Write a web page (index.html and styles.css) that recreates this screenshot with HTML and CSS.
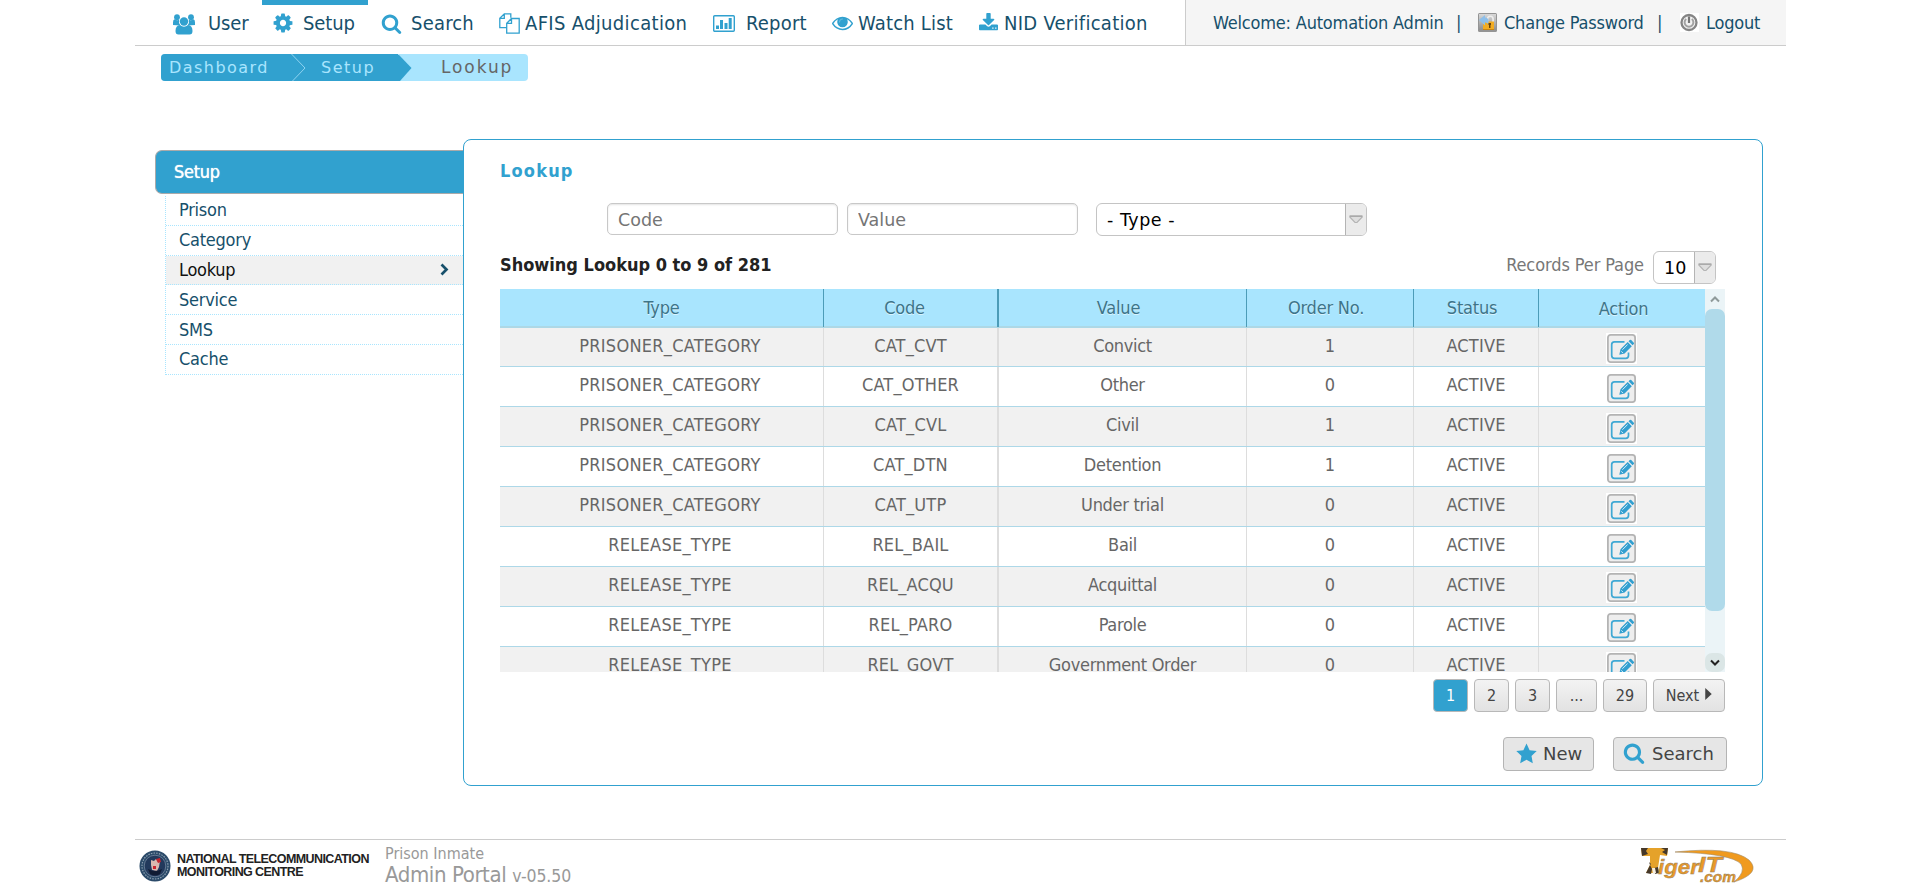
FILE: index.html
```
<!DOCTYPE html>
<html lang="en">
<head>
<meta charset="utf-8">
<title>Lookup - Prison Inmate Admin Portal</title>
<link rel="stylesheet" href="styles.css">
</head>
<body>
<svg class="defs" width="0" height="0" aria-hidden="true">
  <symbol id="i-search" viewBox="0 0 1792 1792"><path d="M1216 832q0-185-131.500-316.500t-316.500-131.500-316.500 131.500-131.500 316.500 131.500 316.500 316.500 131.500 316.500-131.500 131.500-316.500zm512 832q0 52-38 90t-90 38q-54 0-90-38l-343-342q-179 124-399 124-143 0-273.500-55.500t-225-150-150-225-55.500-273.500 55.500-273.500 150-225 225-150 273.500-55.500 273.500 55.500 225 150 150 225 55.500 273.500q0 220-124 399l343 343q37 37 37 90z"/></symbol>
  <symbol id="i-edit" viewBox="0 0 31 31">
    <rect width="31" height="31" fill="#fff"/>
    <rect x="1.900" y="1.900" width="27.200" height="27.200" rx="2.800" fill="#eee" stroke="#b4b4b4" stroke-width="1.800"/>
    <path d="M18.500 8.800H8.500a2.800 2.800 0 0 0-2.800 2.800v11a2.800 2.800 0 0 0 2.800 2.800h11.200a2.800 2.800 0 0 0 2.800-2.800v-3" fill="none" stroke="#3fa8d4" stroke-width="1.700"/>
    <path d="M13.300 21.700l1.200-5.400 7.200-7.200 4.100 4.100-7.200 7.200zM22.500 8.300l1.300-1.200q.7-.6 1.400 0l2.600 2.600q.6.700 0 1.400l-1.200 1.200z" fill="#329fd0"/>
    <path d="M16.300 16.800l5.300-5.200M15.200 18.300l1.700 1.700" stroke="#d8eef8" stroke-width="1"/>
  </symbol>
  <symbol id="i-drop" viewBox="0 0 14 9"><path d="M.8 1h12.400v1L8 7.500H6L.8 2z" fill="#dedede" stroke="#b4b4b4" stroke-width="1.200"/><path d="M1 1.200h12" stroke="#aaa" stroke-width="1.400"/></symbol>
</svg>
<div class="page">
  <header class="topbar">
    <nav class="nav">
      <a class="nav-item user"><svg class="ico" width="22" height="21" viewBox="0 0 22 21"><circle cx="4" cy="3.200" r="2.900"/><circle cx="18" cy="3.200" r="2.900"/><path d="M0 11V8.500Q0 5.500 1.500 5.300q2.500 1.500 4.700.5Q5.300 9 7.500 11.500zM22 11V8.500Q22 5.500 20.500 5.300q-2.500 1.500-4.700.5.900 3.200-1.300 5.700z"/><circle cx="11" cy="7.500" r="4.200"/><path d="M7 11q4 3.300 8 0 4.500.6 4.500 6 0 3.500-3 3.500h-11q-3 0-3-3.500 0-5.400 4.500-6z"/></svg><span>User</span></a>
      <a class="nav-item setup active"><svg class="ico" width="22" height="22" viewBox="0 0 1792 1792"><path d="M1152 896q0-106-75-181t-181-75-181 75-75 181 75 181 181 75 181-75 75-181zm512-109v222q0 12-8 23t-20 13l-185 28q-19 54-39 91 35 50 107 138 10 12 10 25t-9 23q-27 37-99 108t-94 71q-12 0-26-9l-138-108q-44 23-91 38-16 136-29 186-7 28-36 28h-222q-14 0-24.500-8.500t-11.500-21.500l-28-184q-49-16-90-37l-141 107q-10 9-25 9-14 0-25-11-126-114-165-168-7-10-7-23 0-12 8-23 15-21 51-66.500t54-70.500q-27-50-41-99l-183-27q-13-2-21-12.500t-8-23.500v-222q0-12 8-23t19-13l186-28q14-46 39-92-40-57-107-138-10-12-10-24 0-10 9-23 26-36 98.500-107.500t94.500-71.500q13 0 26 10l138 107q44-23 91-38 16-136 29-186 7-28 36-28h222q14 0 24.500 8.500t11.500 21.500l28 184q49 16 90 37l142-107q9-9 24-9 13 0 25 10 129 119 165 170 7 8 7 22 0 12-8 23-15 21-51 66.500t-54 70.500q26 50 41 98l183 28q13 2 21 12.500t8 23.500z"/></svg><span>Setup</span></a>
      <a class="nav-item search"><svg class="ico" width="21" height="21"><use href="#i-search"/></svg><span>Search</span></a>
      <a class="nav-item afis"><svg class="ico line" width="21" height="21" viewBox="0 0 21 21"><path d="M7.500 14.700H.8V5.300L5.300.8h6.500v4M5.300.8v4.500H.8M12.500 5.500h7.700v14.700H7.700V10.300zM12.500 5.500v4.800H7.700"/></svg><span>AFIS Adjudication</span></a>
      <a class="nav-item report"><svg class="ico" width="22" height="17" viewBox="0 0 22 17"><rect x=".7" y=".7" width="20.600" height="15.600" rx="1" fill="none" stroke="#31a1cf" stroke-width="1.400"/><path d="M3 10.500h3V14H3zM7 5h3v9H7zM11.500 8h3v6h-3zM15.700 3h3v11h-3z"/></svg><span>Report</span></a>
      <a class="nav-item watch"><svg class="ico" width="21" height="21" viewBox="0 64 1792 1792"><path d="M1664 960q-152-236-381-353 61 104 61 225 0 185-131.500 316.500t-316.500 131.500-316.500-131.500-131.500-316.500q0-121 61-225-229 117-381 353 133 205 333.500 326.500t434.500 121.500 434.500-121.500 333.500-326.500zm-720-384q0-20-14-34t-34-14q-125 0-214.500 89.500t-89.500 214.500q0 20 14 34t34 14 34-14 14-34q0-86 61-147t147-61q20 0 34-14t14-34zm848 384q0 34-20 69-140 230-376.500 368.500t-499.500 138.500-499.500-139-376.500-368q-20-35-20-69t20-69q140-229 376.500-368t499.500-139 499.500 139 376.500 368q20 35 20 69z"/><circle cx="896" cy="860" r="400" opacity=".75"/></svg><span>Watch List</span></a>
      <a class="nav-item nid"><svg class="ico" width="19" height="18" viewBox="64 0 1664 1600" preserveAspectRatio="none"><path d="M1344 1344q0-26-19-45t-45-19-45 19-19 45 19 45 45 19 45-19 19-45zm256 0q0-26-19-45t-45-19-45 19-19 45 19 45 45 19 45-19 19-45zm128-224v320q0 40-28 68t-68 28h-1472q-40 0-68-28t-28-68v-320q0-40 28-68t68-28h465l135 136q58 56 136 56t136-56l136-136h464q40 0 68 28t28 68zm-325-569q17 41-14 70l-448 448q-18 19-45 19t-45-19l-448-448q-31-29-14-70 17-39 59-39h256v-448q0-26 19-45t45-19h256q26 0 45 19t19 45v448h256q42 0 59 39z"/></svg><span>NID Verification</span></a>
    </nav>
    <div class="account">
      <span class="welcome">Welcome: Automation Admin</span><span class="bar">|</span>
      <a class="change"><svg class="pic" width="19" height="19" viewBox="0 0 19 19"><defs><linearGradient id="g1" x1="0" y1="0" x2="0" y2="1"><stop offset="0" stop-color="#d8d8d8"/><stop offset="1" stop-color="#8f8f8f"/></linearGradient></defs><rect width="19" height="19" rx="1.500" fill="#949494"/><rect x="1" y="1" width="17" height="16" fill="url(#g1)"/><path d="M9.500 9V6a2.800 2.800 0 0 1 5.600 0v3" fill="none" stroke="#eee" stroke-width="1.600"/><rect x="5" y="8.500" width="11" height="8.500" fill="#f2ac22"/><path d="M5 16.500h11" stroke="#c98510"/><path d="M1 7l6-5v2.500q3.500 0 3.500 4v3q-1.500-2.200-3.500-2v3z" fill="#8dbfea"/><path d="M10.500 10H13v2h-.5v3H11v-3h-.5z" fill="#67420b"/></svg><span>Change Password</span></a><span class="bar">|</span>
      <a class="logout"><svg class="pic" width="19" height="19" viewBox="0 0 19 19"><rect width="19" height="19" fill="#fff"/><circle cx="9" cy="9.500" r="7.500" fill="#f2f2f2" stroke="#858585" stroke-width="2.300"/><path d="M6.200 6a4.400 4.400 0 1 0 5.600 0" fill="none" stroke="#a2a2a2" stroke-width="2"/><path d="M9 3.500v6.500" stroke="#777" stroke-width="2.200"/></svg><span>Logout</span></a>
    </div>
  </header>

  <div class="crumbs">
    <a class="crumb first">Dashboard</a>
    <svg class="sep" width="15" height="27" viewBox="0 0 15 27"><path d="M.5 0L14 14 1.500 27" fill="none" stroke="#8fd3f0" stroke-width="1"/></svg>
    <a class="crumb second">Setup</a>
    <svg class="tip" width="14" height="27" viewBox="0 0 14 27"><path d="M0 1l1 0 12.500 13L2 27H0z" fill="#31a1cf"/></svg>
    <span class="crumb current">Lookup</span>
  </div>

  <main class="main">
    <aside class="side">
      <h2 class="side-head">Setup</h2>
      <ul class="side-list">
        <li>Prison</li>
        <li>Category</li>
        <li class="on"><span>Lookup</span><svg width="9" height="13" viewBox="0 0 9 13"><path d="M1.500 1.500L6.500 6.500 1.500 11.500" fill="none" stroke="#17506b" stroke-width="2.700"/></svg></li>
        <li>Service</li>
        <li>SMS</li>
        <li>Cache</li>
      </ul>
    </aside>
    <section class="panel">
      <h1 class="title">Lookup</h1>
      <div class="filters">
        <input class="field" type="text" placeholder="Code">
        <input class="field" type="text" placeholder="Value">
        <div class="select type"><span>- Type -</span><i><svg width="14" height="9"><use href="#i-drop"/></svg></i></div>
      </div>
      <div class="summary">
        <strong>Showing Lookup 0 to 9 of 281</strong>
        <span class="rpp">Records Per Page</span>
        <div class="select count"><span>10</span><i><svg width="14" height="9"><use href="#i-drop"/></svg></i></div>
      </div>
      <div class="grid">
        <div class="table">
          <div class="row head"><div>Type</div><div>Code</div><div>Value</div><div>Order No.</div><div>Status</div><div>Action</div></div>
          <div class="row"><div>PRISONER_CATEGORY</div><div>CAT_CVT</div><div class="val">Convict</div><div>1</div><div>ACTIVE</div><div><svg class="edit"><use href="#i-edit"/></svg></div></div>
          <div class="row"><div>PRISONER_CATEGORY</div><div>CAT_OTHER</div><div class="val">Other</div><div>0</div><div>ACTIVE</div><div><svg class="edit"><use href="#i-edit"/></svg></div></div>
          <div class="row"><div>PRISONER_CATEGORY</div><div>CAT_CVL</div><div class="val">Civil</div><div>1</div><div>ACTIVE</div><div><svg class="edit"><use href="#i-edit"/></svg></div></div>
          <div class="row"><div>PRISONER_CATEGORY</div><div>CAT_DTN</div><div class="val">Detention</div><div>1</div><div>ACTIVE</div><div><svg class="edit"><use href="#i-edit"/></svg></div></div>
          <div class="row"><div>PRISONER_CATEGORY</div><div>CAT_UTP</div><div class="val">Under trial</div><div>0</div><div>ACTIVE</div><div><svg class="edit"><use href="#i-edit"/></svg></div></div>
          <div class="row"><div>RELEASE_TYPE</div><div>REL_BAIL</div><div class="val">Bail</div><div>0</div><div>ACTIVE</div><div><svg class="edit"><use href="#i-edit"/></svg></div></div>
          <div class="row"><div>RELEASE_TYPE</div><div>REL_ACQU</div><div class="val">Acquittal</div><div>0</div><div>ACTIVE</div><div><svg class="edit"><use href="#i-edit"/></svg></div></div>
          <div class="row"><div>RELEASE_TYPE</div><div>REL_PARO</div><div class="val">Parole</div><div>0</div><div>ACTIVE</div><div><svg class="edit"><use href="#i-edit"/></svg></div></div>
          <div class="row"><div>RELEASE_TYPE</div><div>REL_GOVT</div><div class="val">Government Order</div><div>0</div><div>ACTIVE</div><div><svg class="edit"><use href="#i-edit"/></svg></div></div>
        </div>
        <div class="scroll">
          <div class="arrow"><svg width="10" height="7" viewBox="0 0 10 7"><path d="M1 5.500L5 1.500l4 4" fill="none" stroke="#8f9a9a" stroke-width="2"/></svg></div>
          <div class="thumb"></div>
          <div class="arrow down"><svg width="10" height="7" viewBox="0 0 10 7"><path d="M1 1.500l4 4 4-4" fill="none" stroke="#222" stroke-width="2"/></svg></div>
        </div>
      </div>
      <div class="pager">
        <a class="pg on">1</a><a class="pg">2</a><a class="pg">3</a><a class="pg dots">...</a><a class="pg last">29</a><a class="pg next"><span>Next</span><svg width="7" height="12" viewBox="0 0 7 13"><path d="M0 0l7 6.500L0 13z" fill="#444"/></svg></a>
      </div>
      <div class="actions">
        <button class="btn new"><svg width="21" height="21" viewBox="0 0 21 21"><path d="M10.500.5l3.100 6.700 7.100.9-5.200 5 1.300 7.200-6.300-3.500-6.300 3.500 1.300-7.200-5.200-5 7.100-.9z" fill="#31a1cf"/></svg><span>New</span></button>
        <button class="btn find"><svg width="22" height="22" fill="#31a1cf"><use href="#i-search"/></svg><span>Search</span></button>
      </div>
    </section>
  </main>

  <footer class="foot">
    <svg class="seal" width="32" height="32" viewBox="0 0 32 32"><circle cx="16" cy="16" r="15.500" fill="#2b4a69"/><circle cx="16" cy="16" r="13" fill="none" stroke="#8ea0b2" stroke-width="1.200" stroke-dasharray="1.500 1.200"/><circle cx="16" cy="16" r="10.800" fill="#22395c" stroke="#7488a0" stroke-width=".8"/><path d="M12 10l3 1 2-2 2 3 2-1-1 6-2 4-5-1-1-5z" fill="#d9b9b0"/><path d="M17 9l4-1 1 4-3 1zM14 16h3v3h-3z" fill="#c9252f"/><path d="M9 19q7 4 14 0l-2 5q-5 3-10 0z" fill="#101b33"/></svg>
    <div class="org">NATIONAL TELECOMMUNICATION<br>MONITORING CENTRE</div>
    <div class="product"><div class="p1">Prison Inmate</div><div class="p2">Admin Portal <small>v-05.50</small></div></div>
    <svg class="tiger" width="116" height="38" viewBox="0 0 116 38">
      <path d="M35 5Q92-1 109 13q13 13-15 22 12-10 7-18Q91 6.500 35 5z" fill="#f09a1e" stroke="#a08a66" stroke-width=".6"/>
      <path d="M1 1h27l-1 8-7-1-2 13 1 5H6l4-8V9L2 9z" fill="#e5a22a"/>
      <path d="M1 1h7l-2 3 2 3-6 2zM21 1h7l-1 7-5-3 3-2zM6 26l4-8 2 4-1 5zM14 21l4-1 1 6-4 1zM9 15l2 2-1 1z" fill="#45382a"/>
      <path d="M12 21h3l1 5-3 1z" fill="#f6efe2"/>
      <text x="18" y="27" class="t1" textLength="41" lengthAdjust="spacingAndGlyphs">iger</text>
      <text x="58" y="24.500" class="t2" textLength="24" lengthAdjust="spacingAndGlyphs">IT</text>
      <text x="60" y="35" class="t3" textLength="36" lengthAdjust="spacingAndGlyphs">.com</text>
    </svg>
  </footer>
</div>
</body>
</html>
```
FILE: styles.css
```
* { box-sizing: border-box; }
body {
  margin: 0;
  background: #fff;
  font-family: "DejaVu Sans Condensed", "DejaVu Sans", sans-serif;
  font-size: 18px;
  color: #17506b;
}
.defs { position: absolute; }
.page { width: 1651px; margin: 0 auto; height: 892px; overflow: hidden; }
svg { flex: none; display: block; }

/* top bar */
.topbar { display: flex; height: 46px; border-bottom: 1px solid #ccc; }
.nav { display: flex; flex: 1; padding-left: 29px; font-size: 20px; line-height: 45px; letter-spacing: .2px; white-space: nowrap; }
.nav-item { display: flex; align-items: center; height: 46px; }
.ico { fill: #31a1cf; }
.ico.line { fill: none; stroke: #31a1cf; stroke-width: 1.3; }
.user { width: 98px; padding-left: 9px; letter-spacing: -.1px; }
.user .ico { margin: 2px 13px 0 0; }
.setup { width: 106px; padding-left: 10px; letter-spacing: -.1px; }
.setup.active { box-shadow: inset 0 5px #31a1cf; }
.setup .ico { margin-right: 9px; }
.search { width: 131px; padding-left: 13px; }
.search .ico { margin-right: 9px; }
.afis { width: 214px; letter-spacing: .33px; }
.afis .ico { margin-right: 5px; }
.report { width: 119px; letter-spacing: .2px; }
.report .ico { margin-right: 11px; }
.watch { width: 147px; }
.watch .ico { margin-right: 5px; }
.nid { letter-spacing: .28px; }
.nid .ico { margin: -3px 6px 0 0; }
.account {
  display: flex; align-items: center; width: 601px; height: 45px; padding-left: 27px;
  background: #f5f5f5; border-left: 1px solid #ccc;
  line-height: 45px; letter-spacing: -.2px; white-space: nowrap;
}
.welcome { width: 243px; }
.bar { width: 22px; }
.change, .logout { display: flex; align-items: center; }
.change { width: 179px; }
.change .pic { margin-right: 7px; }
.logout .pic { margin: 0 7px 0 1px; }

/* breadcrumb */
.crumbs {
  display: flex; width: 367px; height: 27px; margin: 8px 0 0 26px; border-radius: 4px; overflow: hidden;
  background: #a9e5fe; line-height: 27px; font-size: 16px; color: #a9e5fe; white-space: nowrap;
  font-family: "DejaVu Sans", sans-serif;
}
.crumb.first, .crumb.second, .sep { background: #31a1cf; }
.crumb.first { width: 130px; padding-left: 8px; letter-spacing: 1.45px; }
.crumb.second { width: 92px; padding-left: 15px; letter-spacing: 1.5px; }
.crumb.current { padding-left: 29px; font-size: 17px; letter-spacing: 1.9px; color: #666; }

/* body */
.main { display: flex; height: 647px; margin: 58px 0 0 20px; }
.side { width: 308px; padding-top: 11px; }
.side-head {
  height: 44px; margin: 0; padding-left: 18px; border: 1px solid #aaa; border-right: 0;
  border-radius: 7px 0 0 7px; background: #31a1cf; color: #fff;
  font-size: 18px; font-weight: normal; line-height: 42px; letter-spacing: -.3px; text-shadow: 0 0 1px #fff;
}
.side-list { list-style: none; margin: 2px 0 0 10px; padding: 0; border-left: 1px dotted #a9e5fe; }
.side-list li {
  display: flex; justify-content: space-between; align-items: center; height: 29.8px;
  padding: 0 14px 0 13px; border-bottom: 1px dotted #a9e5fe; letter-spacing: -.25px; line-height: 28px;
}
.side-list li.on { background: #f1f1f1; color: #111; }
.panel { width: 1300px; border: 1px solid #31a1cf; border-radius: 8px; padding: 0 29px 0 36px; }
.title { margin: 20px 0 0; font: bold 18px/22px "DejaVu Sans Condensed", sans-serif; letter-spacing: 1.2px; color: #31a1cf; }
.filters { display: flex; margin: 21px 0 0 107px; height: 33px; font-family: "DejaVu Sans", sans-serif; }
.field {
  width: 231px; height: 32px; margin-right: 9px; padding: 1px 10px 0; border: 1px solid #c8c8c8; border-radius: 5px;
  box-shadow: inset 0 1px 2px #e4e4e4; background: #fff; font: 17.5px "DejaVu Sans", sans-serif;
}
.field::placeholder { color: #757575; opacity: 1; }
.select {
  display: flex; height: 33px; border: 1px solid #c4c4c4; border-radius: 6px; overflow: hidden; background: #fff;
  color: #000; font: 17.5px/32px "DejaVu Sans", sans-serif;
}
.select span { flex: 1; }
.select i { display: flex; justify-content: center; align-items: center; width: 21px; border-left: 1px solid #b4b4b4; background: #ebebeb; }
.type { width: 271px; margin-left: 9px; }
.type span { padding-left: 10px; letter-spacing: .5px; }
.summary { display: flex; height: 38px; margin-top: 15px; line-height: 28px; }
.summary strong { flex: 1; color: #222; }
.rpp { color: #777; letter-spacing: -.1px; margin-right: 9px; }
.count { width: 63px; margin-right: 17px; }
.count span { padding-left: 10px; font-size: 17.5px; line-height: 33px; }

/* table */
.grid { display: flex; width: 1225px; height: 383px; overflow: hidden; }
.table { width: 1205px; }
.row { display: grid; grid-template-columns: 324px 175px 248px 167px 125px 166px; height: 40px; border-bottom: 1px solid #add8e8; color: #666; background: #fff; }
.row > div { display: flex; justify-content: center; padding-bottom: 2px; line-height: 36px; border-right: 1px solid #ddd; letter-spacing: .2px; }
.row > div:nth-child(1) { padding-left: 17px; letter-spacing: .27px; }
.row > div:nth-child(2) { border-right-width: 2px; }
.row > div:last-child { border-right: 0; }
.row > .val { letter-spacing: -.3px; }
.row:nth-child(even) { background: #f1f1f1; }
.row:nth-child(2) { height: 39px; }
.row:nth-child(n+5) > div { line-height: 35px; }
.row.head { height: 39px; border-bottom: 2px solid #add8e6; background: #a9e5fe; color: #3d7489; text-shadow: 0 1px #d9f4ff; }
.row.head > div { padding: 0 8px 0 0; line-height: 37px; border-color: #4c9cb8; letter-spacing: -.2px; }
.row.head > div:nth-child(1) { padding: 0; }
.row.head > div:nth-child(2) { padding-right: 12px; }
.row.head > div:last-child { padding: 1px 0 0 3px; }
.edit { width: 31px; height: 31px; margin: 5px 1px 0 0; }
.row:nth-child(n+3):nth-child(-n+7) .edit { margin-top: 6px; }
.scroll { display: flex; flex-direction: column; width: 20px; background: #ebf4f7; }
.arrow { display: flex; align-items: center; justify-content: center; height: 20px; }
.thumb { height: 302px; border-radius: 7px; background: #b0daea; }
.arrow.down { margin-top: auto; height: 19px; border-radius: 7px; background: #dbe6e6; }

/* pager and buttons */
.pager { display: flex; justify-content: flex-end; gap: 6px; margin-top: 7px; padding-right: 8px; font-size: 16px; }
.pg {
  display: flex; justify-content: center; align-items: center; width: 35px; height: 33px; border: 1px solid #b8b8b8;
  border-radius: 4px; background: linear-gradient(#f3f3f3, #e2e2e2); color: #444; line-height: 31px;
}
.pg.on { background: #31a1cf; color: #fff; }
.pg.dots { width: 41px; }
.pg.last { width: 44px; }
.pg.next { width: 72px; gap: 6px; }
.pg.next svg { margin-top: -3px; }
.actions { display: flex; justify-content: flex-end; gap: 19px; margin-top: 25px; padding-right: 6px; }
.btn {
  display: flex; align-items: center; height: 34px; padding: 0 0 0 12px; border: 1px solid #b4b4b4; border-radius: 4px;
  background: #e6e6e6; color: #444; font: 18px/32px "DejaVu Sans", sans-serif;
}
.btn.new { width: 91px; gap: 6px; }
.btn.new svg { margin-top: -2px; }
.btn.find { width: 114px; padding-left: 9px; gap: 7px; }
.btn.find svg { margin-top: -3px; }

/* footer */
.foot { display: flex; height: 53px; margin-top: 53px; padding-left: 4px; border-top: 1px solid #ccc; }
.seal { margin: 10px 6px 0 0; }
.org { width: 208px; padding-top: 13px; font: bold 12.5px/13px "Liberation Sans", Arial, sans-serif; letter-spacing: -.58px; color: #222; white-space: nowrap; }
.product { flex: 1; color: #999; white-space: nowrap; }
.p1 { margin-top: 5px; font-size: 16px; line-height: 18px; }
.p2 { font-size: 22px; line-height: 23px; letter-spacing: -.4px; }
.p2 small { font-size: 17.5px; letter-spacing: -.1px; }
.tiger { margin: 7px 30px 0 0; }
.t1, .t2, .t3 { font-family: "Liberation Sans", Arial, sans-serif; font-style: italic; font-weight: bold; fill: #e9992a; stroke: #8a7c66; stroke-width: .4px; }
.t1 { font-size: 21px; }
.t2 { font-size: 22px; }
.t3 { font-size: 14px; }
```
